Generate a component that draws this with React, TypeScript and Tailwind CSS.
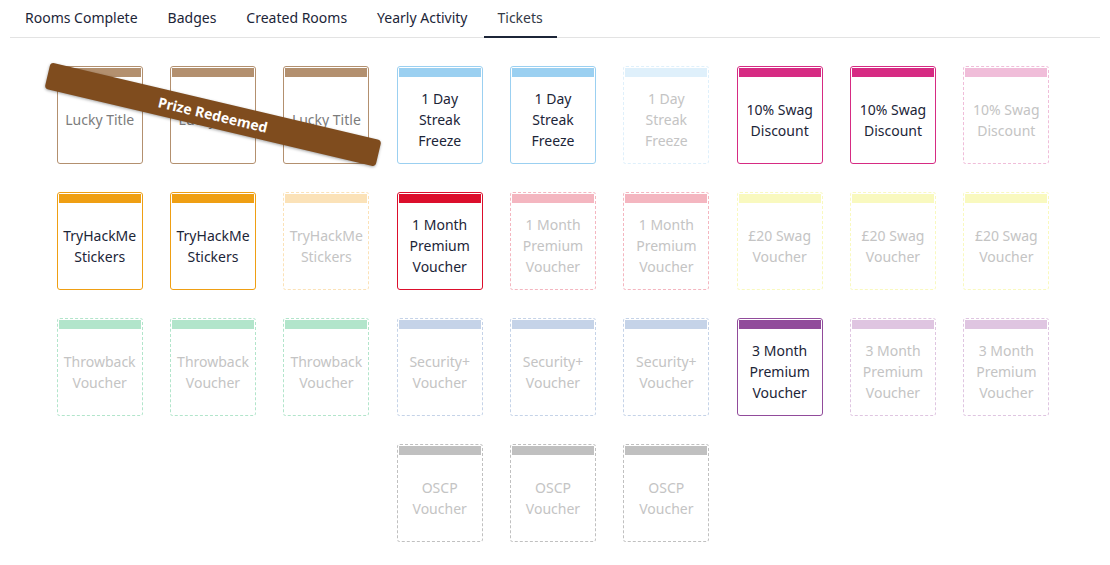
import React from "react";

type Card = {
  lines: string[];
  stripe: string;
  border: string;
  text: string;
  dashed?: boolean;
};

const DARK = "text-[#1c2538]";
const FADE = "text-[#c4c4c4]";

const lucky: Card = { lines: ["Lucky Title"], stripe: "bg-[#b3906f]", border: "border-[#b3906f]", text: "text-[#7c7c7c]" };
const dayOn: Card = { lines: ["1 Day", "Streak", "Freeze"], stripe: "bg-[#9bd0f1]", border: "border-[#9bd0f1]", text: DARK };
const dayOff: Card = { lines: ["1 Day", "Streak", "Freeze"], stripe: "bg-[#dff0fb]", border: "border-[#dff0fb]", text: FADE, dashed: true };
const swagOn: Card = { lines: ["10% Swag", "Discount"], stripe: "bg-[#d62b83]", border: "border-[#d62b83]", text: DARK };
const swagOff: Card = { lines: ["10% Swag", "Discount"], stripe: "bg-[#f0bdd9]", border: "border-[#f0bdd9]", text: FADE, dashed: true };
const thmOn: Card = { lines: ["TryHackMe", "Stickers"], stripe: "bg-[#ef9f13]", border: "border-[#ef9f13]", text: DARK };
const thmOff: Card = { lines: ["TryHackMe", "Stickers"], stripe: "bg-[#fbe2b8]", border: "border-[#fbe2b8]", text: FADE, dashed: true };
const monthOn: Card = { lines: ["1 Month", "Premium", "Voucher"], stripe: "bg-[#dc0e2c]", border: "border-[#dc0e2c]", text: DARK };
const monthOff: Card = { lines: ["1 Month", "Premium", "Voucher"], stripe: "bg-[#f4b6c0]", border: "border-[#f4b6c0]", text: FADE, dashed: true };
const poundOff: Card = { lines: ["£20 Swag", "Voucher"], stripe: "bg-[#f9f9bf]", border: "border-[#f9f9bf]", text: FADE, dashed: true };
const throwOff: Card = { lines: ["Throwback", "Voucher"], stripe: "bg-[#b2e5cb]", border: "border-[#b2e5cb]", text: FADE, dashed: true };
const secOff: Card = { lines: ["Security+", "Voucher"], stripe: "bg-[#c5d3e8]", border: "border-[#c5d3e8]", text: FADE, dashed: true };
const threeOn: Card = { lines: ["3 Month", "Premium", "Voucher"], stripe: "bg-[#914b9b]", border: "border-[#914b9b]", text: DARK };
const threeOff: Card = { lines: ["3 Month", "Premium", "Voucher"], stripe: "bg-[#dfc5e1]", border: "border-[#dfc5e1]", text: FADE, dashed: true };
const oscpOff: Card = { lines: ["OSCP", "Voucher"], stripe: "bg-[#c0c0c0]", border: "border-[#c0c0c0]", text: FADE, dashed: true };

const cards: Card[] = [
  lucky, lucky, lucky, dayOn, dayOn, dayOff, swagOn, swagOn, swagOff,
  thmOn, thmOn, thmOff, monthOn, monthOff, monthOff, poundOff, poundOff, poundOff,
  throwOff, throwOff, throwOff, secOff, secOff, secOff, threeOn, threeOff, threeOff,
  oscpOff, oscpOff, oscpOff,
];

const tabs = ["Rooms Complete", "Badges", "Created Rooms", "Yearly Activity", "Tickets"];

function Ticket({ c }: { c: Card }) {
  return (
    <div
      className={`w-[86px] h-[98px] border rounded-[3px] p-px flex flex-col bg-white ${c.border} ${
        c.dashed ? "border-dashed" : "border-solid"
      }`}
    >
      <div className={`h-[9px] shrink-0 ${c.stripe}`} />
      <div className={`flex-1 flex flex-col items-center justify-center text-center text-[14px] leading-[21px] ${c.text}`}>
        {c.lines.map((l, i) => (
          <div key={i} className="whitespace-nowrap">{l}</div>
        ))}
      </div>
    </div>
  );
}

export default function App() {
  return (
    <div
      className="relative w-[1110px] h-[565px] bg-white overflow-hidden"
      style={{ fontFamily: '"Noto Sans", "Open Sans", sans-serif' }}
    >
      <div className="mx-[10px] flex border-b border-[#e3e3e3] h-[38px] pl-px">
        {tabs.map((t) => (
          <div
            key={t}
            className={`px-[14px] mr-[2px] flex items-center pb-[2px] text-[14px] ${
              t === "Tickets" ? "border-b-2 border-[#1c2538] mb-[-1px] text-[#343a47]" : "text-[#1c2538]"
            }`}
          >
            {t}
          </div>
        ))}
      </div>
      <div className="mx-[10px] pr-[4px] pt-[28px] flex flex-wrap justify-center gap-x-[27.33px] gap-y-[28px]">
        {cards.map((c, i) => (
          <Ticket key={i} c={c} />
        ))}
      </div>
      <div className="absolute left-[43px] top-[101px] w-[340px] h-[27px] rotate-[13.3deg] bg-[#7f4c1e] rounded-[4px] shadow-[0_1px_3px_rgba(0,0,0,0.35)] flex items-center justify-center text-white font-bold text-[14px]">
        Prize Redeemed
      </div>
    </div>
  );
}
